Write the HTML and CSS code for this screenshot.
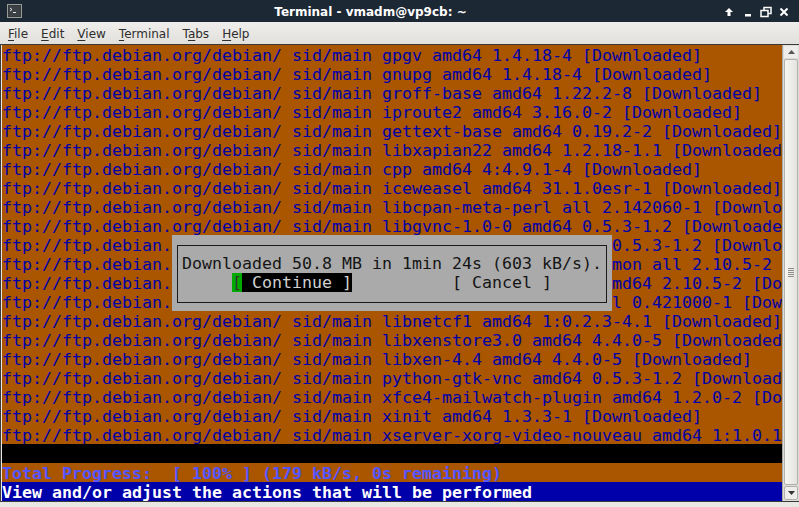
FILE: index.html
```html
<!doctype html>
<html lang="en">
<head>
    <meta charset="UTF-8">
    <title>Terminal - vmadm@vp9cb: ~</title>
    <link rel="stylesheet" href="styles.css">
</head>
<body>
    <div class="window">
        <div class="titlebar">
            <div class="title-icon">
                <svg width="15" height="14" viewBox="0 0 15 14">
                    <rect x="0.5" y="0.5" width="14" height="13" fill="#2e3436" stroke="#9a9c98"/>
                    <rect x="1.5" y="1.5" width="12" height="11" fill="#3b4144"/>
                    <path d="M3 4 L5 5.5 L3 7" stroke="#e8e8e8" stroke-width="1" fill="none"/>
                    <path d="M6 8.5 H9" stroke="#e8e8e8" stroke-width="1"/>
                </svg>
            </div>
            <div class="title">Terminal - vmadm@vp9cb: ~</div>
            <svg class="controls" width="80" height="22" viewBox="0 0 80 22">
                <path d="M10 8 L14 12 H11.5 V16 H8.5 V12 H6 Z" fill="#fff"/>
                <rect x="26" y="14" width="6" height="2.5" fill="#fff"/>
                <rect x="45" y="7.5" width="7" height="6" fill="none" stroke="#fff" stroke-width="1.5"/>
                <rect x="42" y="10.5" width="7" height="6" fill="#1d2835" stroke="#fff" stroke-width="1.5"/>
                <path d="M61.5 8.5 L68.5 15.5 M68.5 8.5 L61.5 15.5" stroke="#fff" stroke-width="2"/>
            </svg>
        </div>

        <div class="menubar">
            <span><u>F</u>ile</span>
            <span><u>E</u>dit</span>
            <span><u>V</u>iew</span>
            <span><u>T</u>erminal</span>
            <span>T<u>a</u>bs</span>
            <span><u>H</u>elp</span>
        </div>

        <div class="term-frame">
            <div class="screen">
                <div class="row">ftp://ftp.debian.org/debian/ sid/main gpgv amd64 1.4.18-4 [Downloaded]</div>
                <div class="row">ftp://ftp.debian.org/debian/ sid/main gnupg amd64 1.4.18-4 [Downloaded]</div>
                <div class="row">ftp://ftp.debian.org/debian/ sid/main groff-base amd64 1.22.2-8 [Downloaded]</div>
                <div class="row">ftp://ftp.debian.org/debian/ sid/main iproute2 amd64 3.16.0-2 [Downloaded]</div>
                <div class="row">ftp://ftp.debian.org/debian/ sid/main gettext-base amd64 0.19.2-2 [Downloaded]</div>
                <div class="row">ftp://ftp.debian.org/debian/ sid/main libxapian22 amd64 1.2.18-1.1 [Downloaded]</div>
                <div class="row">ftp://ftp.debian.org/debian/ sid/main cpp amd64 4:4.9.1-4 [Downloaded]</div>
                <div class="row">ftp://ftp.debian.org/debian/ sid/main iceweasel amd64 31.1.0esr-1 [Downloaded]</div>
                <div class="row">ftp://ftp.debian.org/debian/ sid/main libcpan-meta-perl all 2.142060-1 [Downloaded]</div>
                <div class="row">ftp://ftp.debian.org/debian/ sid/main libgvnc-1.0-0 amd64 0.5.3-1.2 [Downloaded]</div>
                <div class="row">ftp://ftp.debian.org/debian/ sid/main libgtk-vnc-2.0-0 amd64 0.5.3-1.2 [Downloaded]</div>
                <div class="row">ftp://ftp.debian.org/debian/ sid/main gir1.2-libxfce4util-common all 2.10.5-2 [Downloaded]</div>
                <div class="row">ftp://ftp.debian.org/debian/ sid/main libxfce4util-bin-tool amd64 2.10.5-2 [Downloaded]</div>
                <div class="row">ftp://ftp.debian.org/debian/ sid/main libmodule-build-perl all 0.421000-1 [Downloaded]</div>
                <div class="row">ftp://ftp.debian.org/debian/ sid/main libnetcf1 amd64 1:0.2.3-4.1 [Downloaded]</div>
                <div class="row">ftp://ftp.debian.org/debian/ sid/main libxenstore3.0 amd64 4.4.0-5 [Downloaded]</div>
                <div class="row">ftp://ftp.debian.org/debian/ sid/main libxen-4.4 amd64 4.4.0-5 [Downloaded]</div>
                <div class="row">ftp://ftp.debian.org/debian/ sid/main python-gtk-vnc amd64 0.5.3-1.2 [Downloaded]</div>
                <div class="row">ftp://ftp.debian.org/debian/ sid/main xfce4-mailwatch-plugin amd64 1.2.0-2 [Downloaded]</div>
                <div class="row">ftp://ftp.debian.org/debian/ sid/main xinit amd64 1.3.3-1 [Downloaded]</div>
                <div class="row">ftp://ftp.debian.org/debian/ sid/main xserver-xorg-video-nouveau amd64 1:1.0.11-1 [Downloaded]</div>
                <div class="row row-black"></div>
                <div class="row row-progress">Total Progress:  [ 100% ] (179 kB/s, 0s remaining)</div>
                <div class="row row-status">View and/or adjust the actions that will be performed</div>

                <div class="dialog">
                    <div class="dialog-box">
                        <div class="row">Downloaded 50.8 MB in 1min 24s (603 kB/s).</div>
                        <div class="row">     <span class="btn-focus"><span class="cursor">[</span> Continue ]</span>          [ Cancel ]</div>
                    </div>
                </div>
            </div>

            <div class="scrollbar">
                <div class="stepper">
                    <svg width="7" height="4" viewBox="0 0 7 4"><path d="M0 4 L3.5 0 L7 4 Z" fill="#555"/></svg>
                </div>
                <div class="thumb"><div class="grip"></div></div>
                <div class="stepper stepper-down">
                    <svg width="7" height="4" viewBox="0 0 7 4"><path d="M0 0 L3.5 4 L7 0 Z" fill="#333"/></svg>
                </div>
            </div>
        </div>

        <div class="bottom"></div>
    </div>
</body>
</html>
```

FILE: styles.css
```css
*{
    box-sizing: border-box;
}

body{
    margin: 0;
    background-color: #e8e7e4;
}

.window{
    width: 799px;
    height: 507px;
    display: flex;
    flex-direction: column;
    overflow: hidden;
    font-family: "DejaVu Sans", sans-serif;
}

/* title bar */

.titlebar{
    height: 22px;
    flex-shrink: 0;
    background-color: #1d2835;
    display: flex;
    align-items: center;
    color: #fff;
}

.title-icon{
    width: 28px;
    padding-left: 7px;
    display: flex;
    align-items: center;
}

.title{
    flex: 1;
    text-align: center;
    font-weight: bold;
    font-size: 12px;
    padding-top: 2px;
    padding-right: 6px;
}

.controls{
    display: block;
}

/* menu */

.menubar{
    height: 22px;
    flex-shrink: 0;
    background: linear-gradient(#efeeec, #e1e0dc);
    display: flex;
    align-items: center;
    gap: 13px;
    padding-left: 8px;
    padding-top: 1px;
    font-size: 12px;
    color: #2e2e2e;
}

.menubar u{
    text-decoration-thickness: 1px;
    text-underline-offset: 2px;
}

/* terminal */

.term-frame{
    height: 458px;
    flex-shrink: 0;
    display: flex;
    border-top: 1px solid #3a3a3a;
    border-bottom: 1px solid #3a3a3a;
    border-left: 1px solid #3a3a3a;
    padding-left: 1px;
    background-color: #e8e7e4;
}

.screen{
    position: relative;
    width: 780px;
    height: 456px;
    background-color: #aa5500;
    color: #0000aa;
    font-family: "DejaVu Sans Mono", monospace;
    font-size: 16.61px;
    line-height: 19px;
    overflow: hidden;
}

.row{
    height: 19px;
    padding-top: 1px;
    white-space: pre;
}

.row-black{
    background-color: #000;
}

.row-progress{
    color: #5555ff;
    font-weight: bold;
}

.row-status{
    background-color: #0000aa;
    color: #fff;
    font-weight: bold;
}

.dialog{
    position: absolute;
    left: 170px;
    top: 190px;
    width: 440px;
    height: 76px;
    background-color: #aaaaaa;
    padding: 10px 5px 8px 5px;
    color: #151515;
}

.dialog-box{
    height: 100%;
    border: 1px solid #1a1a1a;
    padding: 7px 0 0 4px;
}

.btn-focus{
    background-color: #000;
    color: #d0d0d0;
}

.cursor{
    background-color: #00aa00;
    color: #333;
}

/* scrollbar */

.scrollbar{
    width: 17px;
    display: flex;
    flex-direction: column;
    border-left: 1px solid #a8a7a3;
    background-color: #dddcd8;
    padding: 1px;
}

.stepper{
    height: 12px;
    display: flex;
    align-items: center;
    justify-content: center;
    background-color: #eeedeb;
}

.stepper-down{
    height: 14px;
    border: 1px solid #b1b0ac;
    border-radius: 2px;
}

.thumb{
    flex: 1;
    margin: 1px 0;
    border: 1px solid #b1b0ac;
    border-radius: 2px;
    background: linear-gradient(to right, #f6f6f4, #e4e3e0);
    display: flex;
    align-items: center;
    justify-content: center;
}

.grip{
    width: 6px;
    height: 9px;
    background: repeating-linear-gradient(#8e8d8a 0 1px, transparent 1px 2px);
}

.bottom{
    flex: 1;
    background-color: #e8e7e4;
}
```
